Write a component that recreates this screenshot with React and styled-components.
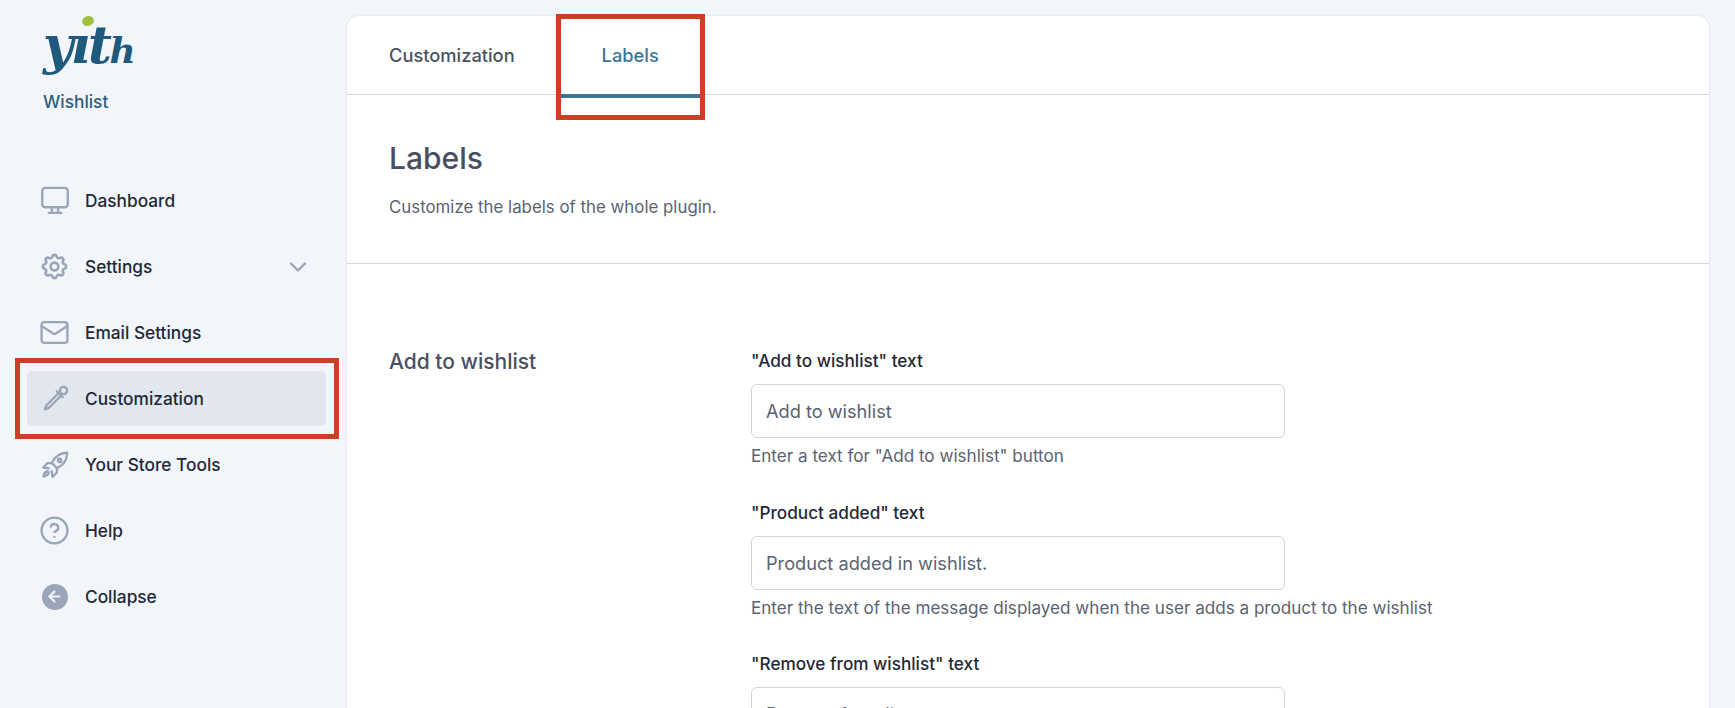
import styled, { createGlobalStyle } from "styled-components";
import { Mail, CircleHelp, ChevronDown, ArrowLeft } from "lucide-react";
import { HiOutlineCog } from "react-icons/hi";

const fields = [
  { label: '"Add to wishlist" text', value: "Add to wishlist", hint: 'Enter a text for "Add to wishlist" button' },
  { label: '"Product added" text', value: "Product added in wishlist.", hint: "Enter the text of the message displayed when the user adds a product to the wishlist" },
  { label: '"Remove from wishlist" text', value: "Remove from list" },
];

export default function App() {
  return (
    <>
      <GlobalStyle />
      <Page>
        <Sidebar>
          <Logo>
            <LogoText>
              yıt<small>h</small>
              <LogoDot />
            </LogoText>
            <PluginName>Wishlist</PluginName>
          </Logo>
          <Menu>
            {menu.map((item) => (
              <MenuItem key={item.label} $active={item.active}>
                <IconSlot>
                  <item.icon />
                </IconSlot>
                {item.label}
                {item.arrow && (
                  <Arrow>
                    <ChevronDown size={28} strokeWidth={2.1} />
                  </Arrow>
                )}
              </MenuItem>
            ))}
          </Menu>
        </Sidebar>
        <Card>
          <Tabs>
            <Tab>Customization</Tab>
            <Tab $active>Labels</Tab>
          </Tabs>
          <Header>
            <Title>Labels</Title>
            <Description>Customize the labels of the whole plugin.</Description>
          </Header>
          <Section>
            <SectionName>Add to wishlist</SectionName>
            <Fields>
              {fields.map((field) => (
                <Field key={field.label}>
                  <Label>{field.label}</Label>
                  <Input readOnly value={field.value} />
                  {field.hint && <Hint>{field.hint}</Hint>}
                </Field>
              ))}
            </Fields>
          </Section>
        </Card>
      </Page>
    </>
  );
}

function MonitorIcon() {
  return (
    <DrawnIcon width="30" height="30" viewBox="0 0 24 24">
      <rect x="1.8" y="1.5" width="20.4" height="15.5" rx="2.4" />
      <path d="M9.5 17.5v2.5M14.5 17.5v2.5M7 21.5h10" />
    </DrawnIcon>
  );
}

function DropperIcon() {
  return (
    <DrawnIcon width="30" height="30" viewBox="0 0 24 24">
      <circle cx="18.8" cy="5.2" r="2.9" />
      <path d="M13.4 5.8l4.8 4.8" />
      <path d="M14.6 7.6L5 17.2l-1 3 3-1 9.6-9.6" />
    </DrawnIcon>
  );
}

function RocketIcon() {
  return (
    <DrawnIcon width="30" height="30" viewBox="0 0 24 24">
      <path d="M21.8 2.2c-5.4.2-10 3-12.3 8.3l4 4c5.3-2.3 8.1-6.9 8.3-12.3z" />
      <circle cx="15.7" cy="8.3" r="1.3" />
      <path d="M9.5 10.5H6L2.5 14l4.6.7" />
      <path d="M13.5 14.5V18L10 21.5l-.7-4.6" />
      <path d="M6 17c-2 .5-3 2.5-3.2 4.2C4.5 21 6.5 20 7 18" />
    </DrawnIcon>
  );
}

function CogIcon() {
  return <HiOutlineCog size={31} />;
}

function MailIcon() {
  return <Mail size={31} strokeWidth={1.8} />;
}

function HelpIcon() {
  return <CircleHelp size={31} strokeWidth={1.8} />;
}

function BackIcon() {
  return (
    <CollapseIcon>
      <ArrowLeft size={17} strokeWidth={3} />
    </CollapseIcon>
  );
}

const menu = [
  { label: "Dashboard", icon: MonitorIcon },
  { label: "Settings", icon: CogIcon, arrow: true },
  { label: "Email Settings", icon: MailIcon },
  { label: "Customization", icon: DropperIcon, active: true },
  { label: "Your Store Tools", icon: RocketIcon },
  { label: "Help", icon: HelpIcon },
  { label: "Collapse", icon: BackIcon },
];

const GlobalStyle = createGlobalStyle`
  html, body {
    margin: 0;
    height: 708px;
    overflow: hidden;
    background: #f2f5fa;
    font-family: Inter, "Liberation Sans", sans-serif;
  }
`;

const Page = styled.div`
  display: flex;
  height: 708px;
  overflow: hidden;
  padding: 16px 26px 0 0;
  box-sizing: border-box;
`;

const Sidebar = styled.aside`
  width: 347px;
  flex-shrink: 0;
`;

const Logo = styled.div`
  padding-left: 43px;
  height: 157px;
`;

const LogoText = styled.div`
  position: relative;
  width: 96px;
  height: 62px;
  font-family: "DejaVu Serif", serif;
  font-style: italic;
  font-weight: 700;
  font-size: 52px;
  line-height: 58px;
  letter-spacing: -2.5px;
  color: #1f5a7d;

  small {
    font-size: 36px;
    letter-spacing: 0;
  }
`;

const LogoDot = styled.span`
  position: absolute;
  left: 39px;
  top: 0;
  width: 12px;
  height: 10px;
  border-radius: 50%;
  background: #a2c03c;
  transform: rotate(-15deg);
`;

const PluginName = styled.div`
  margin-top: 13px;
  font-size: 17.3px;
  font-weight: 500;
  color: #2a5f7e;
`;

const Menu = styled.nav`
  display: flex;
  flex-direction: column;
  gap: 11px;
`;

const MenuItem = styled.div`
  position: relative;
  display: flex;
  align-items: center;
  height: 55px;
  margin: 0 21px 0 27px;
  padding-left: 12px;
  border-radius: 5px;
  font-size: 17.3px;
  font-weight: 450;
  color: #1f2937;
  background: ${(p) => (p.$active ? "#e2e7ef" : "transparent")};

  &::after {
    content: ${(p) => (p.$active ? '""' : "none")};
    position: absolute;
    inset: -13px -13px -13px -12px;
    border: 5px solid #cc3f25;
    box-sizing: border-box;
  }
`;

const IconSlot = styled.span`
  display: flex;
  justify-content: center;
  width: 31px;
  margin-right: 15px;
  color: #9aa5b8;
`;

const DrawnIcon = styled.svg`
  fill: none;
  stroke: currentColor;
  stroke-width: 1.9;
  stroke-linecap: round;
  stroke-linejoin: round;
`;

const CollapseIcon = styled.span`
  display: flex;
  align-items: center;
  justify-content: center;
  width: 26px;
  height: 26px;
  border-radius: 50%;
  background: #9aa5b8;
  color: #f2f5fa;
`;

const Arrow = styled.span`
  display: flex;
  margin-left: auto;
  margin-right: 14px;
  color: #9aa5b8;
`;

const Card = styled.main`
  flex: 1;
  min-width: 0;
  background: #fff;
  border-radius: 12px 12px 0 0;
  box-shadow: 0 0 2px rgba(60, 70, 90, 0.2);
`;

const Tabs = styled.div`
  display: flex;
  height: 78px;
  padding-left: 42px;
  border-bottom: 1px solid #d3d6da;
`;

const Tab = styled.div`
  position: relative;
  display: flex;
  align-items: center;
  justify-content: center;
  height: 82px;
  box-sizing: border-box;
  width: ${(p) => (p.$active ? "141px" : "auto")};
  margin-left: ${(p) => (p.$active ? "45px" : "0")};
  padding-bottom: ${(p) => (p.$active ? "0" : "4px")};
  font-size: 18.3px;
  font-weight: 450;
  color: ${(p) => (p.$active ? "#3d7694" : "#4a5261")};
  border-bottom: ${(p) => (p.$active ? "4px solid #3d7694" : "none")};

  &::after {
    content: ${(p) => (p.$active ? '""' : "none")};
    position: absolute;
    inset: -2px -4px -26px -4px;
    border: 5px solid #cc3f25;
    box-sizing: border-box;
  }
`;

const Header = styled.header`
  height: 169px;
  padding: 45px 42px 0;
  box-sizing: border-box;
  border-bottom: 1px solid #d3d6da;
`;

const Title = styled.h1`
  margin: 0;
  font-size: 30px;
  line-height: 36px;
  font-weight: 500;
  color: #465062;
`;

const Description = styled.p`
  margin: 21px 0 0;
  font-size: 16.85px;
  line-height: 20px;
  color: #5a6372;
`;

const Section = styled.section`
  display: flex;
  padding: 87px 42px 0;
`;

const SectionName = styled.h2`
  width: 362px;
  margin: 0;
  font-size: 21px;
  line-height: 22px;
  font-weight: 500;
  color: #465062;
`;

const Fields = styled.div`
  display: flex;
  flex-direction: column;
  gap: 36.5px;
`;

const Field = styled.div`
  display: flex;
  flex-direction: column;
`;

const Label = styled.label`
  font-size: 17.2px;
  line-height: 20px;
  font-weight: 450;
  color: #1f2937;
  margin-bottom: 13px;
`;

const Input = styled.input`
  width: 534px;
  height: 54px;
  box-sizing: border-box;
  padding: 0 14px;
  border: 1px solid #cfd3da;
  border-radius: 6px;
  font-family: inherit;
  font-size: 18.2px;
  color: #5a6372;
  outline: none;
`;

const Hint = styled.div`
  margin-top: 8px;
  font-size: 17.1px;
  line-height: 20px;
  color: #5a6372;
`;
